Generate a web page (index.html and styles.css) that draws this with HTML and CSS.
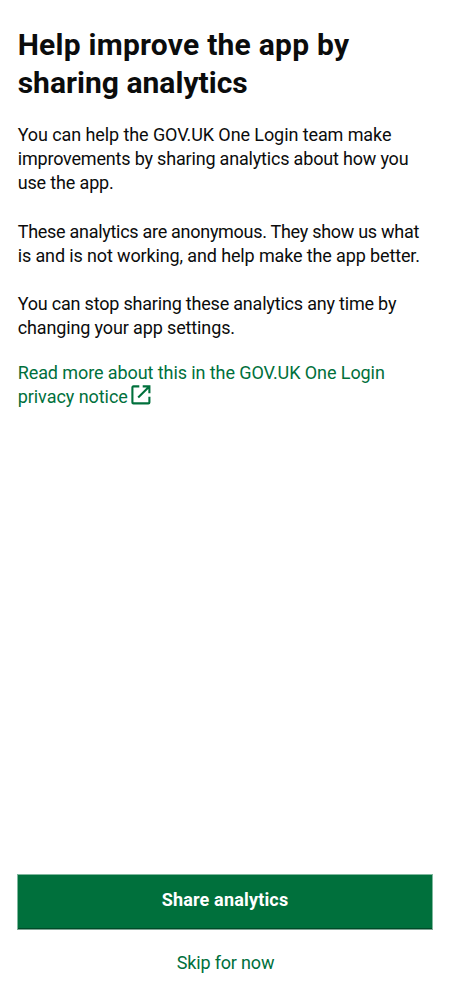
FILE: index.html
```html
<!DOCTYPE html>
<html lang="en">
<head>
<meta charset="utf-8">
<meta name="viewport" content="width=device-width, initial-scale=1">
<title>Help improve the app by sharing analytics</title>
<link rel="stylesheet" href="styles.css">
</head>
<body>
<main class="screen">
  <h1 class="title"><span class="line t1">Help improve the app by</span> <span class="line t2">sharing analytics</span></h1>
  <div class="copy">
    <p class="para"><span class="line b1">You can help the GOV.UK One Login team make</span> <span class="line b2">improvements by sharing analytics about how you</span> <span class="line b3">use the app.</span></p>
    <p class="para"><span class="line b4">These analytics are anonymous. They show us what</span> <span class="line b5">is and is not working, and help make the app better.</span></p>
    <p class="para"><span class="line b6">You can stop sharing these analytics any time by</span> <span class="line b7">changing your app settings.</span></p>
  </div>
  <a class="link" href="#"><span class="line b8">Read more about this in the GOV.UK One Login</span> <span class="line last"><span class="b9">privacy notice</span><svg class="icon" viewBox="0 0 20 20" fill="none" stroke="currentColor" stroke-width="2.1"><path d="M8.3 1.4H2.4Q1.4 1.4 1.4 2.4V17.4Q1.4 18.4 2.4 18.4H17.4Q18.4 18.4 18.4 17.4V11.7M11.7 1.4H18.4V8.3M18 1.8L7.2 12.6"/></svg></span></a>
  <div class="actions">
    <button class="primary"><span class="s1">Share analytics</span></button>
    <a class="skip" href="#"><span class="s2">Skip for now</span></a>
  </div>
</main>
</body>
</html>
```
FILE: styles.css
```css
* { box-sizing: border-box; }
body {
  margin: 0;
  background: #fff;
  color: #0b0c0c;
  font: 18px/24.15px Roboto, sans-serif;
}
.screen {
  display: flex;
  flex-direction: column;
  height: 1000px;
  padding: 26px 17px 0;
}
.line { display: block; white-space: nowrap; }
.title {
  margin: 0 0 22px;
  padding-left: 0.7px;
  font-size: 30px;
  line-height: 37.5px;
  font-weight: 700;
}
.copy { display: flex; flex-direction: column; gap: 24.15px; padding-left: 0.7px; }
.para { margin: 0; }
.link { margin-top: 20.6px; padding-left: 0.7px; color: #00703c; text-decoration: none; }
.last { display: flex; }
.icon { width: 20px; height: 20px; margin: 0 0 0 3.3px; }
.actions {
  display: flex;
  flex-direction: column;
  align-items: center;
  margin-top: auto;
  height: 126px;
}
.primary {
  width: 100%;
  height: 56px;
  padding: 0 0 4px;
  border: 1px solid #80b89e;
  border-bottom-color: #80a493;
  background: #00703c;
  background-clip: padding-box;
  box-shadow: inset 0 -1px #004a28;
  color: #fff;
  font: 700 18px/24px Roboto, sans-serif;
}
.skip { margin-top: 21px; padding-left: 1px; color: #00703c; text-decoration: none; }

.t1 { letter-spacing: 0.24px; }
.t2 { letter-spacing: 0.02px; }
.b1 { letter-spacing: -0.09px; }
.b2 { letter-spacing: -0.185px; }
.b3 { letter-spacing: -0.15px; }
.b4 { letter-spacing: -0.285px; }
.b5 { letter-spacing: -0.13px; }
.b6 { letter-spacing: -0.2px; }
.b7 { letter-spacing: -0.13px; }
.b8 { letter-spacing: -0.086px; }
.b9 { letter-spacing: -0.05px; }
.s1 { letter-spacing: 0.17px; }
.s2 { letter-spacing: -0.17px; }
```
